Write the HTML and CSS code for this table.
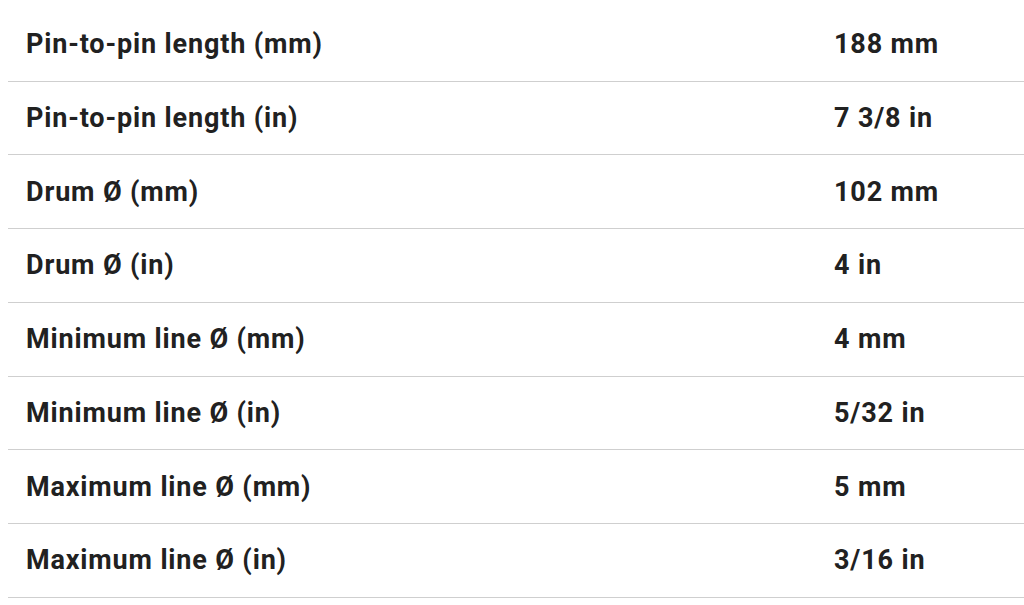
FILE: index.html
```html
<!DOCTYPE html>
<html>
<head>
<meta charset="utf-8">
<link rel="stylesheet" href="styles.css">
</head>
<body>
<div class="specs">
  <div class="row"><div class="label">Pin-to-pin length (mm)</div><div class="value">188 mm</div></div>
  <div class="row"><div class="label">Pin-to-pin length (in)</div><div class="value">7 3/8 in</div></div>
  <div class="row"><div class="label">Drum Ø (mm)</div><div class="value">102 mm</div></div>
  <div class="row"><div class="label">Drum Ø (in)</div><div class="value">4 in</div></div>
  <div class="row"><div class="label">Minimum line Ø (mm)</div><div class="value">4 mm</div></div>
  <div class="row"><div class="label">Minimum line Ø (in)</div><div class="value">5/32 in</div></div>
  <div class="row"><div class="label">Maximum line Ø (mm)</div><div class="value">5 mm</div></div>
  <div class="row"><div class="label">Maximum line Ø (in)</div><div class="value">3/16 in</div></div>
</div>
</body>
</html>
```

FILE: styles.css
```css
html, body {
  margin: 0;
  padding: 0;
  background: #ffffff;
}
body {
  font-family: Roboto, "Liberation Sans", sans-serif;
  color: #212121;
  overflow: hidden;
}
.specs {
  margin: 8px 0 0 8px;
  display: flex;
  flex-direction: column;
}
.row {
  display: grid;
  grid-template-columns: 808px 1fr;
  align-items: center;
  height: 73.71px;
  box-sizing: border-box;
  border-bottom: 1.5px solid #cfcfcf;
}
.label, .value {
  padding-left: 18px;
  font-size: 27px;
  font-weight: 700;
  letter-spacing: 0.85px;
  line-height: 30px;
}
```
